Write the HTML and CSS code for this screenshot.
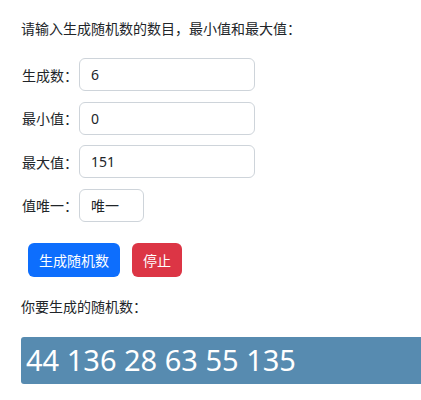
FILE: index.html
```html
<!DOCTYPE html>
<html lang="zh-CN">
<head>
  <meta charset="UTF-8" />
  <meta name="viewport" content="width=device-width, initial-scale=1" />
  <title>随机数生成</title>
  <link rel="stylesheet" href="styles.css">
</head>
<body>
  <div class="container">
    <p class="intro">请输入生成随机数的数目，最小值和最大值：</p>

    <div class="form-row">
      <label for="count">生成数：</label>
      <input id="count" class="form-control" type="text" value="6" />
    </div>
    <div class="form-row">
      <label for="min">最小值：</label>
      <input id="min" class="form-control" type="text" value="0" />
    </div>
    <div class="form-row">
      <label for="max">最大值：</label>
      <input id="max" class="form-control" type="text" value="151" />
    </div>
    <div class="form-row">
      <label for="unique">值唯一：</label>
      <select id="unique" class="form-control small">
        <option>唯一</option>
      </select>
    </div>

    <div class="buttons">
      <button class="btn btn-primary">生成随机数</button>
      <button class="btn btn-danger">停止</button>
    </div>

    <p class="result-label">你要生成的随机数：</p>
    <div class="result">44 136 28 63 55 135</div>
  </div>
</body>
</html>
```

FILE: styles.css
```css
body {
  margin: 0;
  background: #fff;
  color: #212529;
  font-family: "Noto Sans", "Noto Sans CJK SC", sans-serif;
  overflow-x: hidden;
}

.container {
  padding: 18px 0 0 21px;
}

.intro,
.result-label {
  margin: 0;
  font-family: "Noto Sans CJK SC", sans-serif;
  font-size: 14px;
  line-height: 20px;
}

.intro {
  margin-bottom: 20px;
}

.form-row {
  display: flex;
  align-items: center;
  margin-bottom: 10.5px;
}

.form-row label {
  flex-shrink: 0;
  width: 57px;
  padding-left: 1px;
  white-space: nowrap;
  font-family: "Noto Sans CJK SC", sans-serif;
  font-size: 14px;
}

.form-control {
  box-sizing: border-box;
  width: 176px;
  height: 33px;
  padding: 0 11px;
  border: 1px solid #ced4da;
  border-radius: 6px;
  background: #fff;
  color: #212529;
  font-family: "Noto Sans", "Noto Sans CJK SC", sans-serif;
  font-size: 14px;
}

.form-control.small {
  width: 65px;
  -webkit-appearance: none;
  appearance: none;
  font-family: "Noto Sans CJK SC", sans-serif;
}

.buttons {
  display: flex;
  gap: 12px;
  margin: 21px 0 19px 7px;
}

.btn {
  height: 34px;
  padding: 0 11px;
  border: none;
  border-radius: 6px;
  color: #fff;
  font-family: "Noto Sans CJK SC", sans-serif;
  font-size: 14px;
  cursor: pointer;
}

.btn-primary {
  background: #0d6efd;
}

.btn-danger {
  background: #dc3545;
}

.result-label {
  margin-bottom: 21px;
}

.result {
  box-sizing: border-box;
  width: 404px;
  height: 47px;
  padding-left: 5px;
  background: #578bb0;
  border-radius: 3px 0 0 3px;
  color: #fff;
  font-family: "Noto Sans", sans-serif;
  font-size: 29px;
  line-height: 46px;
}
```
